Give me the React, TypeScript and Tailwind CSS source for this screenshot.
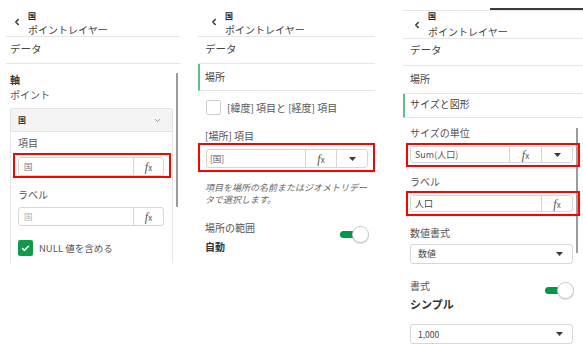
import { ChevronLeft, ChevronDown, Check } from 'lucide-react';

const font = "font-['Noto_Sans_CJK_JP','Noto_Sans',sans-serif]";

function Fx() {
  return (
    <span className="flex items-baseline text-[#555]">
      <span className="italic font-['Liberation_Serif',serif] text-[12px] leading-none">f</span>
      <span className="text-[8px] leading-none">x</span>
    </span>
  );
}

function Caret() {
  return (
    <svg width="7" height="4" viewBox="0 0 7 4">
      <polygon points="0,0 7,0 3.5,4" fill="#3a3a3a" />
    </svg>
  );
}

function Toggle() {
  return (
    <div className="flex items-center">
      <div className="w-[20px] h-[7px] rounded-full bg-[#009845]" />
      <div className="-ml-[8px] w-[17px] h-[17px] rounded-full bg-white border border-[#c8c8c8] shadow-[0_1px_1px_rgba(0,0,0,0.15)]" />
    </div>
  );
}

function PanelOne() {
  return (
    <div className="w-[195px] shrink-0 relative pl-[6px] pr-[15px] h-[263px] overflow-hidden">
      <div className="flex h-[37px] border-b border-[#e6e6e6] pt-[11px]">
        <div className="ml-[6px] pt-[6px]">
          <ChevronLeft size={10} strokeWidth={3.5} color="#333" />
        </div>
        <div className="ml-[6px]">
          <div className="text-[8px] leading-[9px] font-bold text-[#222]">国</div>
          <div className="mt-[4px] text-[10px] leading-[12px] text-[#444]">ポイントレイヤー</div>
        </div>
      </div>
      <div className="h-[27px] border-b border-[#e6e6e6] pl-[4px] pt-[5px] text-[10.5px] leading-[14px] text-[#444]">データ</div>

      <div className="pl-[4px] pt-[9px] text-[10px] leading-[14px] font-bold text-[#333]">軸</div>
      <div className="pl-[4px] mt-[1px] text-[10px] leading-[14px] text-[#555]">ポイント</div>

      <div className="ml-[4px] mt-[6px] w-[163px]">
        <div className="h-[24px] bg-[#f4f4f4] border border-[#e3e3e3] rounded-t-[2px] flex items-center justify-between pl-[7px] pr-[10px]">
          <span className="text-[8px] font-bold text-[#333]">国</span>
          <ChevronDown size={9} color="#777" />
        </div>
        <div className="border-x border-[#e8e8e8] pl-[7px] pr-[8px] pt-[4px] pb-[7px]">
          <div className="text-[10px] leading-[14px] text-[#555]">項目</div>
          <div className="mt-[3px] -ml-[5px] w-[158px] border-2 border-[#ff0000] pl-[3px] pr-[5px] pt-[2px]">
            <div className="h-[19px] w-[146px] border border-[#d6d6d6] rounded-[3px] flex">
              <div className="flex-1 flex items-center pl-[5px] text-[8.5px] text-[#777]">国</div>
              <div className="w-[30px] border-l border-[#d6d6d6] flex items-center justify-center"><Fx /></div>
            </div>
          </div>
          <div className="mt-[10px] text-[10px] leading-[14px] text-[#555]">ラベル</div>
          <div className="mt-[5px] h-[19px] w-[146px] border border-[#d6d6d6] rounded-[3px] flex">
            <div className="flex-1 flex items-center pl-[5px] text-[8.5px] text-[#b0b0b0]">国</div>
            <div className="w-[30px] border-l border-[#d6d6d6] flex items-center justify-center"><Fx /></div>
          </div>
          <div className="mt-[14px] flex items-center gap-[6px]">
            <div className="w-[15px] h-[16px] rounded-[2px] bg-[#0f9a48] flex items-center justify-center">
              <Check size={9} strokeWidth={4} color="#fff" />
            </div>
            <span className="text-[9.5px] text-[#555]">NULL 値を含める</span>
          </div>
        </div>
      </div>
      <div className="absolute left-[176px] top-[73px] w-[2px] h-[134px] bg-[#9c9c9c]" />
    </div>
  );
}

function PanelTwo() {
  return (
    <div className="w-[195px] shrink-0 pl-[3px] pr-[15px]">
      <div className="flex h-[37px] border-b border-[#e6e6e6] pt-[11px]">
        <div className="ml-[11px] pt-[6px]">
          <ChevronLeft size={10} strokeWidth={3.5} color="#333" />
        </div>
        <div className="ml-[6px]">
          <div className="text-[8px] leading-[9px] font-bold text-[#222]">国</div>
          <div className="mt-[4px] text-[10px] leading-[12px] text-[#444]">ポイントレイヤー</div>
        </div>
      </div>
      <div className="h-[27px] border-b border-[#e6e6e6] pl-[7px] pt-[5px] text-[10.5px] leading-[14px] text-[#444]">データ</div>
      <div className="h-[27px] border-b border-[#e6e6e6] border-l-2 border-l-[#5cc08a] pl-[5px] pt-[6px] text-[10px] leading-[14px] text-[#444]">場所</div>

      <div className="mt-[9px] ml-[8px] flex items-center gap-[6px]">
        <div className="w-[15px] h-[15px] rounded-[2px] border border-[#cfcfcf] bg-white" />
        <span className="text-[10px] leading-[14px] text-[#555]">[緯度] 項目と [経度] 項目</span>
      </div>

      <div className="mt-[14px] pl-[7px] text-[10px] leading-[14px] text-[#555]">[場所] 項目</div>
      <div className="border-2 border-[#ff0000] pl-[6px] pr-[5px] pt-[4px] pb-[2px]">
        <div className="h-[19px] border border-[#d6d6d6] rounded-[3px] flex">
          <div className="flex-1 flex items-center pl-[3px] text-[8.5px] text-[#555]">[国]</div>
          <div className="w-[31px] border-l border-[#d6d6d6] flex items-center justify-center"><Fx /></div>
          <div className="w-[31px] border-l border-[#d6d6d6] flex items-center justify-center"><Caret /></div>
        </div>
      </div>

      <div className="mt-[10px] pl-[7px] text-[9px] leading-[12px] italic text-[#666] whitespace-nowrap">
        項目を場所の名前またはジオメトリデー<br />タで選択します。
      </div>

      <div className="mt-[15px] pl-[7px] pr-[6px] flex justify-between items-start">
        <div>
          <div className="text-[10px] leading-[14px] text-[#555]">場所の範囲</div>
          <div className="mt-[5px] text-[10px] leading-[14px] font-bold text-[#333]">自動</div>
        </div>
        <div className="mt-[5px]"><Toggle /></div>
      </div>
    </div>
  );
}

function PanelThree() {
  return (
    <div className="w-[193px] shrink-0 relative pl-[13px]">
      <div className="h-[11px] border-b border-[#e6e6e6] flex justify-end">
        <div className="mt-[8px] w-[93px] h-[2px] bg-[#3d3d3d]" />
      </div>
      <div className="flex h-[28px] border-b border-[#e6e6e6]">
        <div className="ml-[9px] pt-[9px]">
          <ChevronLeft size={10} strokeWidth={3.5} color="#333" />
        </div>
        <div className="ml-[6px]">
          <div className="text-[8px] leading-[9px] font-bold text-[#222]">国</div>
          <div className="mt-[6px] text-[10px] leading-[12px] text-[#444]">ポイントレイヤー</div>
        </div>
      </div>
      <div className="h-[27px] border-b border-[#e6e6e6] pl-[7px] pt-[4px] text-[10.5px] leading-[14px] text-[#444]">データ</div>
      <div className="h-[28px] border-b border-[#e6e6e6] pl-[7px] pt-[6px] text-[10px] leading-[14px] text-[#444]">場所</div>
      <div className="h-[24px] border-b border-[#e6e6e6] border-l-2 border-l-[#5cc08a] pl-[5px] pt-[3px] text-[10px] leading-[14px] text-[#444]">サイズと図形</div>

      <div className="mt-[8px] pl-[7px] text-[10px] leading-[14px] text-[#555]">サイズの単位</div>
      <div className="mt-[3px] ml-[3px] w-[174px] border-2 border-[#ff0000] pl-[2px] pr-[5px] pt-[1px] pb-[2px] relative z-10">
        <div className="h-[17px] border border-[#d6d6d6] rounded-[3px] flex bg-white">
          <div className="flex-1 flex items-center pl-[4px] text-[9px] text-[#555]">Sum(人口)</div>
          <div className="w-[32px] border-l border-[#d6d6d6] flex items-center justify-center"><Fx /></div>
          <div className="w-[31px] border-l border-[#d6d6d6] flex items-center justify-center"><Caret /></div>
        </div>
      </div>

      <div className="mt-[8px] pl-[7px] text-[10px] leading-[14px] text-[#555]">ラベル</div>
      <div className="mt-[2px] ml-[3px] w-[174px] border-2 border-[#ff0000] pl-[2px] pr-[5px] pt-[2px] pb-[2px] relative z-10">
        <div className="h-[17px] border border-[#d6d6d6] rounded-[3px] flex bg-white">
          <div className="flex-1 flex items-center pl-[4px] text-[9px] text-[#444]">人口</div>
          <div className="w-[31px] border-l border-[#d6d6d6] flex items-center justify-center"><Fx /></div>
        </div>
      </div>

      <div className="mt-[10px] pl-[7px] text-[10px] leading-[14px] text-[#555]">数値書式</div>
      <div className="mt-[4px] ml-[7px] w-[163px] h-[20px] border border-[#d6d6d6] rounded-[3px] flex items-center justify-between pl-[7px] pr-[9px]">
        <span className="text-[9px] text-[#444]">数値</span>
        <Caret />
      </div>

      <div className="mt-[15px] pl-[7px] pr-[9px] flex justify-between items-start">
        <div>
          <div className="text-[10px] leading-[14px] text-[#555]">書式</div>
          <div className="mt-[4px] text-[11px] leading-[14px] font-bold text-[#333]">シンプル</div>
        </div>
        <div className="mt-[3px]"><Toggle /></div>
      </div>

      <div className="mt-[13px] ml-[7px] w-[163px] h-[20px] border border-[#d6d6d6] rounded-[3px] flex items-center justify-between pl-[7px] pr-[9px]">
        <span className="text-[8.5px] text-[#444]">1,000</span>
        <Caret />
      </div>

      <div className="absolute left-[186px] top-[128px] w-[2px] h-[125px] bg-[#9c9c9c]" />
    </div>
  );
}

export default function App() {
  return (
    <div className={`w-[583px] h-[352px] bg-white flex overflow-hidden ${font}`}>
      <PanelOne />
      <PanelTwo />
      <PanelThree />
    </div>
  );
}
